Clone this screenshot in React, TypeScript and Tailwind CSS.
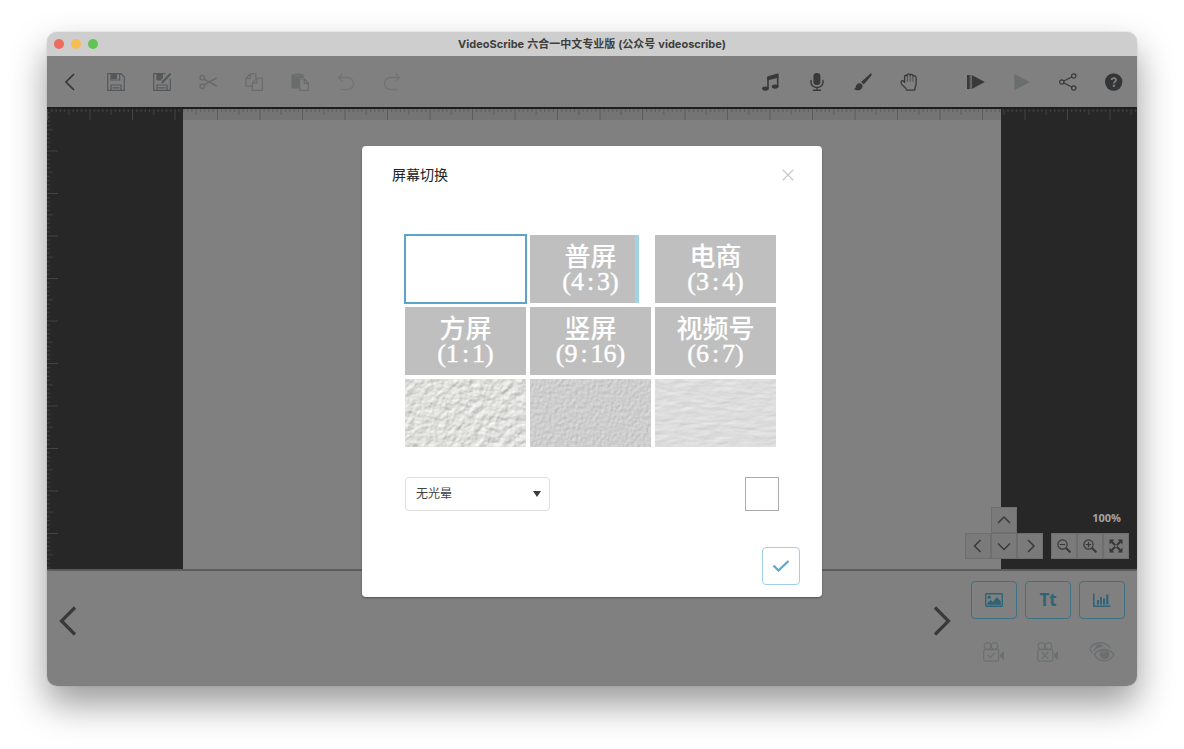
import React, { useState } from "react";

type IconProps = { children: React.ReactNode; className?: string; box?: string };

function Icon({ children, className = "size-[18px]", box = "0 0 18 18" }: IconProps) {
  return (
    <svg
      viewBox={box}
      className={className}
      fill="none"
      stroke="currentColor"
      strokeWidth="1.2"
      strokeLinejoin="round"
      strokeLinecap="round"
      aria-hidden="true"
    >
      {children}
    </svg>
  );
}

type Tool = { label: string; color: string; icon: React.ReactNode };

const disk = "M14 .7H.7v16.6h16.6V4z";

const leftTools: Tool[] = [
  {
    label: "返回",
    color: "text-[#333536]",
    icon: <path d="M13 1 5 9l8 8" strokeWidth="1.7" strokeLinecap="butt" strokeLinejoin="miter" />,
  },
  {
    label: "保存",
    color: "text-[#55585a]",
    icon: (
      <>
        <path d={disk} />
        <path d="M4 17v-5h10v5M6 14.8h6M12.7 1v6H4V1" />
        <path d="M4 1h6v5H4z" fill="currentColor" stroke="none" />
      </>
    ),
  },
  {
    label: "另存为",
    color: "text-[#55585a]",
    icon: (
      <>
        <path d="M12 .7H.7v16.6h16.6V6" />
        <path d="M4 17v-5h10v5M6 14.8h6M4 1v6h4" />
        <path d="M4 1h6v4L7.500 7H4z" fill="currentColor" stroke="none" />
        <path d="M17 1.200 9.400 9.300" strokeWidth="2.200" />
      </>
    ),
  },
  {
    label: "剪切",
    color: "text-[#696c6d]",
    icon: (
      <>
        <circle cx="3.300" cy="4.800" r="2.200" strokeWidth="1.500" />
        <circle cx="3.300" cy="13.200" r="2.200" strokeWidth="1.500" />
        <path d="M5.300 6.200 17 12.800M5.300 11.800 17 5.200" strokeWidth="1.800" />
      </>
    ),
  },
  {
    label: "复制",
    color: "text-[#696c6d]",
    icon: (
      <>
        <path d="M7 13.200H.8V5.500l4.400-4.700h5.600v4.400M5.300 1v4.600H1" />
        <path d="M11.800 5.200h5.500v12.100H7.400V9.800zM11.800 5.400v4.500H7.600" />
      </>
    ),
  },
  {
    label: "粘贴",
    color: "text-[#696c6d]",
    icon: (
      <>
        <path d="M.5 1.200h12.200V5H8v10.500H.5z" fill="currentColor" stroke="none" />
        <path d="M3.800.5h5.600v2H3.800z" fill="currentColor" stroke="none" />
        <path d="M4 2.800h5.200" stroke="#808080" strokeWidth="0.6" />
        <path d="M8.600 6h4.800l4 4.200v7.100H8.600zM13.200 6v4.400h4" />
      </>
    ),
  },
  {
    label: "撤销",
    color: "text-[#717475]",
    icon: <path d="M5 1 1.500 4.500 5 8M1.800 4.500h8.700a6 6 0 0 1 0 12H4" strokeWidth="1.400" />,
  },
  {
    label: "重做",
    color: "text-[#717475]",
    icon: <path d="M13 1l3.500 3.500L13 8M16.200 4.500H7.500a6 6 0 0 0 0 12H14" strokeWidth="1.400" />,
  },
];

const mediaTools: Tool[] = [
  {
    label: "音乐",
    color: "text-[#37393a]",
    icon: (
      <>
        <path d="M5.200 3.400 16.500.3v4.400L5.200 7.600z" fill="currentColor" stroke="none" />
        <path d="M6 5v10M15.700 3v10.500" strokeWidth="1.600" />
        <ellipse cx="3.400" cy="15.600" rx="3.400" ry="2.100" fill="currentColor" stroke="none" />
        <ellipse cx="13.100" cy="13.600" rx="3.400" ry="2.100" fill="currentColor" stroke="none" />
      </>
    ),
  },
  {
    label: "录音",
    color: "text-[#37393a]",
    icon: (
      <>
        <rect x="5.400" y="0" width="7" height="12" rx="3.300" fill="currentColor" stroke="none" />
        <path d="M3 7.500v2a6 5 0 0 0 12 0v-2M9 14.500v2.500M5.500 17.300h7" strokeWidth="1.400" />
      </>
    ),
  },
  {
    label: "画笔",
    color: "text-[#37393a]",
    icon: (
      <>
        <path d="M16.800.3c1 .4 1.300 1.300.6 2.200L9.800 11.500 7.100 9z" fill="currentColor" stroke="none" />
        <path
          d="M6 10.200c1.600.4 2.600 1.500 2.600 3.200-.7 4.300-6.300 5.100-8.700 2.300 2.200 0 1.600-2 2.500-3.700.8-1.400 2.100-2 3.600-1.800z"
          fill="currentColor"
          stroke="none"
        />
      </>
    ),
  },
  {
    label: "选择手势",
    color: "text-[#37393a]",
    icon: (
      <>
        <path
          d="M4.600 9.500V3.600c0-1.700 2.300-1.700 2.500-.6.100-2.800 2.900-2.900 3.100-.6.500-1.600 2.800-1.300 2.900.8.900-1 3 -.6 3 1.500v6.100c0 2.500-1.400 3.500-1.400 6.300H6.600c0-2.500-5.300-4.500-5.600-7.300C.8 7.200 3.200 7 4.600 9.500z"
          strokeWidth="1.300"
        />
        <path d="M7.400 3.500v4.800M10.200 2.500v5.800M12.900 3.500v4.800" strokeWidth="0.700" />
      </>
    ),
  },
];

const playTools: Tool[] = [
  {
    label: "从头播放",
    color: "text-[#37393a]",
    icon: <path d="M0 2h2.800v14H0zM4.800 2l13 7-13 7zM3.600 2h.5v14h-.5z" fill="currentColor" stroke="none" />,
  },
  {
    label: "播放",
    color: "text-[#6b6e6f]",
    icon: <path d="M1.300.8 17 9 1.300 17.200z" fill="currentColor" stroke="none" />,
  },
  {
    label: "分享",
    color: "text-[#37393a]",
    icon: (
      <>
        <circle cx="2.800" cy="9" r="2.200" />
        <circle cx="14.800" cy="3" r="2.200" />
        <circle cx="14.800" cy="15" r="2.200" />
        <path d="m4.900 8 7.800-4M4.900 10l7.800 4" />
      </>
    ),
  },
  {
    label: "帮助",
    color: "text-[#333536]",
    icon: (
      <>
        <circle cx="8.700" cy="9" r="8.700" fill="currentColor" stroke="none" />
        <path d="M6.600 7.100c0-2.700 4.500-2.700 4.500-.2 0 1.700-2.200 1.700-2.200 3.500" stroke="#808080" strokeWidth="1.700" strokeLinecap="butt" />
        <circle cx="8.900" cy="12.700" r="1.200" fill="#808080" stroke="none" />
      </>
    ),
  },
];

function ToolGroup({ tools }: { tools: Tool[] }) {
  return (
    <div className="flex">
      {tools.map((t) => (
        <button key={t.label} aria-label={t.label} className={`flex h-[51px] w-[46px] items-center justify-center ${t.color}`}>
          <Icon>{t.icon}</Icon>
        </button>
      ))}
    </div>
  );
}

const tickSteps = [1, 2, 3, 4, 5, 6, 7, 8, 9, 10];
const tickLength = (i: number) => (i === 10 ? 11 : i === 5 ? 6 : 3);

function Rulers() {
  return (
    <svg className="pointer-events-none absolute inset-0 size-full" aria-hidden="true">
      <defs>
        <pattern id="ruler-x" x="1" width="42.5" height="12" patternUnits="userSpaceOnUse">
          {tickSteps.map((i) => (
            <rect key={i} x={i * 4.25 - 1} y="0" width="1" height={tickLength(i)} fill="#505050" />
          ))}
        </pattern>
        <pattern id="ruler-y" width="12" height="42.5" patternUnits="userSpaceOnUse">
          {tickSteps.map((i) => (
            <rect key={i} x="0" y={i * 4.25 - 1} width={tickLength(i)} height="1" fill="#505050" />
          ))}
        </pattern>
      </defs>
      <rect width="100%" height="12" fill="url(#ruler-x)" opacity="0.7" />
      <rect width="12" height="100%" fill="url(#ruler-y)" opacity="0.7" />
    </svg>
  );
}

const padButton = "flex h-[26px] w-[26px] items-center justify-center border border-[#6e6e6e] bg-[#7a7a7a] text-[#37393a]";

function Chevron({ d }: { d: string }) {
  return (
    <Icon className="size-4 shrink-0" box="0 0 16 16">
      <path d={d} strokeWidth="1.500" strokeLinecap="butt" strokeLinejoin="miter" />
    </Icon>
  );
}

function CanvasControls() {
  return (
    <div className="absolute right-2 bottom-[10px] flex items-end gap-2">
      <div className="grid grid-cols-3">
        <button aria-label="上移" className={`${padButton} col-start-2`}>
          <Chevron d="m2 11 6-6 6 6" />
        </button>
        <button aria-label="左移" className={`${padButton} col-start-1`}>
          <Chevron d="m10.500 2-6 6 6 6" />
        </button>
        <button aria-label="下移" className={padButton}>
          <Chevron d="m2 5.500 6 6 6-6" />
        </button>
        <button aria-label="右移" className={padButton}>
          <Chevron d="m6 2 6 6-6 6" />
        </button>
      </div>
      <div className="flex flex-col items-end">
        <span className="px-2 pb-2 font-['Open_Sans',sans-serif] text-[11px] leading-[14px] font-bold text-[#a3a3a3]">100%</span>
        <div className="flex">
          <button aria-label="缩小" className={padButton}>
            <Icon className="size-[14px] shrink-0" box="0 0 14 14">
              <circle cx="5.500" cy="5.500" r="4.600" />
              <path d="M3.300 5.500h4.400" />
              <path d="m9.200 9.200 3.600 3.600" strokeWidth="2" />
            </Icon>
          </button>
          <button aria-label="放大" className={padButton}>
            <Icon className="size-[14px] shrink-0" box="0 0 14 14">
              <circle cx="5.500" cy="5.500" r="4.600" />
              <path d="M3.300 5.500h4.400M5.500 3.300v4.400" />
              <path d="m9.200 9.200 3.600 3.600" strokeWidth="2" />
            </Icon>
          </button>
          <button aria-label="适应屏幕" className={padButton}>
            <Icon className="size-[14px] shrink-0" box="0 0 14 14">
              <path d="M.5.500h5L.5 5.500zM13.500.500v5l-5-5zM.5 13.500v-5l5 5zM13.500 13.500h-5l5-5z" fill="currentColor" stroke="none" />
              <path d="m2 2 10 10M12 2 2 12" strokeWidth="2.200" strokeLinecap="butt" />
              <path d="m7 5.600 1.400 1.400L7 8.400 5.600 7z" fill="#7a7a7a" stroke="none" />
            </Icon>
          </button>
        </div>
      </div>
    </div>
  );
}

const addButton = "flex h-[38px] w-[46px] items-center justify-center rounded-[4px] border border-[#3f7185] text-[#2f6377]";
const actionButton = "flex h-[38px] w-[46px] items-center justify-center text-[#6c6f70]";

function Camera({ mark }: { mark: string }) {
  return (
    <Icon className="h-5 w-[22px]" box="0 0 22 20">
      <circle cx="4.500" cy="4" r="3.300" />
      <circle cx="11.500" cy="4" r="3.300" />
      <rect x=".7" y="7.600" width="15" height="11.500" rx="1.500" />
      <path d={mark} />
      <path d="M21 9v9l-4-3.300v-2.400z" fill="currentColor" stroke="none" />
    </Icon>
  );
}

function Timeline() {
  return (
    <footer className="flex items-center justify-between border-t-2 border-[#5c5c5c] pr-3 pb-[15px] pl-2">
      <button aria-label="上一帧" className="p-1 text-[#37393a]">
        <Icon className="h-[30px] w-[18px]" box="0 0 18 30">
          <path d="M16 1.500 2.500 15 16 28.500" strokeWidth="3.200" strokeLinecap="butt" strokeLinejoin="miter" />
        </Icon>
      </button>
      <div className="flex items-center gap-5">
        <button aria-label="下一帧" className="text-[#37393a]">
          <Icon className="h-[30px] w-[18px]" box="0 0 18 30">
            <path d="M2 1.500 15.500 15 2 28.500" strokeWidth="3.200" strokeLinecap="butt" strokeLinejoin="miter" />
          </Icon>
        </button>
        <div className="grid grid-cols-3 gap-x-2 gap-y-[14px] pt-[10px]">
          <button aria-label="添加图片" className={addButton}>
            <Icon className="h-[14px] w-[18px]" box="0 0 18 14">
              <rect x=".7" y=".7" width="16.600" height="12.600" rx=".6" strokeWidth="1.400" />
              <path d="M2.500 11.800V10l3-3 2.500 2 4-5 3.800 4.500v3.300z" fill="currentColor" stroke="none" />
              <circle cx="4.300" cy="4.200" r="1.600" fill="currentColor" stroke="none" />
            </Icon>
          </button>
          <button aria-label="添加文字" className={`${addButton} font-['Open_Sans',sans-serif] text-[17px] font-bold`}>
            Tt
          </button>
          <button aria-label="添加图表" className={addButton}>
            <Icon className="h-[14px] w-[18px]" box="0 0 18 14">
              <path d="M.8.500v12.700H17.500" strokeWidth="1.500" strokeLinecap="butt" />
              <path d="M4 7h2v4.500H4zM7 4h2v7.500H7zM10 5.500h2v6h-2zM13.200 1.500h2.200v10h-2.200z" fill="currentColor" stroke="none" />
            </Icon>
          </button>
          <button aria-label="设置镜头" className={actionButton}>
            <Camera mark="m4.800 13.300 2.400 2.300 4.200-4.400" />
          </button>
          <button aria-label="清除镜头" className={actionButton}>
            <Camera mark="m5 10.500 6 6m0-6-6 6" />
          </button>
          <button aria-label="预览" className={actionButton}>
            <Icon className="h-5 w-[26px]" box="0 0 26 20">
              <path d="M.8 7C5-.8 16-1.200 20.800 5.500M3 11 .8 7M5 8.500C6 6.500 7.500 5.300 9.500 4.500" strokeWidth="1.400" />
              <path d="M6.800 3.500c2-1.800 5.500-2 7.800.6L8.500 6.500c-1.200-1-2-1.500-1.700-3z" fill="currentColor" stroke="none" />
              <path d="M5.500 12.300C10 5.800 20 5.800 25 12.500 20 21 9.500 21 5.500 12.300z" fill="#808080" strokeWidth="1.400" />
              <circle cx="15.500" cy="12.500" r="4.900" fill="currentColor" stroke="none" />
              <path d="M13.300 10.800c.7-.9 1.800-1.200 2.700-.9" stroke="#808080" strokeWidth="1" />
            </Icon>
          </button>
        </div>
      </div>
    </footer>
  );
}

type TextureKind = "chips" | "leather" | "paper";
type Screen = { name: string; ratio?: [string, string]; texture?: TextureKind };

const screens: Screen[] = [
  { name: "空白" },
  { name: "普屏", ratio: ["4", "3"] },
  { name: "电商", ratio: ["3", "4"] },
  { name: "方屏", ratio: ["1", "1"] },
  { name: "竖屏", ratio: ["9", "16"] },
  { name: "视频号", ratio: ["6", "7"] },
  { name: "碎纸", texture: "chips" },
  { name: "皮革", texture: "leather" },
  { name: "纸纹", texture: "paper" },
];

const textures = {
  chips: { freq: "0.14 0.15", octaves: 4, seed: 7, scale: 0.9, light: "#e0e0dd" },
  leather: { freq: "0.34 0.28", octaves: 2, seed: 3, scale: 0.35, light: "#cfcfcf" },
  paper: { freq: "0.06 0.2", octaves: 3, seed: 12, scale: 0.3, light: "#dedede" },
};

function Texture({ kind }: { kind: TextureKind }) {
  const t = textures[kind];
  return (
    <svg className="size-full" aria-hidden="true">
      <filter id={`texture-${kind}`} x="0" y="0" width="100%" height="100%" colorInterpolationFilters="sRGB">
        <feTurbulence type="fractalNoise" baseFrequency={t.freq} numOctaves={t.octaves} seed={t.seed} />
        <feColorMatrix values="0 0 0 0 0  0 0 0 0 0  0 0 0 0 0  1 0 0 0 0" />
        <feDiffuseLighting surfaceScale={t.scale} diffuseConstant="1.15" lightingColor={t.light}>
          <feDistantLight azimuth="235" elevation="60" />
        </feDiffuseLighting>
      </filter>
      <rect width="100%" height="100%" filter={`url(#texture-${kind})`} />
    </svg>
  );
}

function ScreenTile({ screen, selected, onSelect }: { screen: Screen; selected: boolean; onSelect: () => void }) {
  const ring = selected ? "outline-2 -outline-offset-1 outline-[#5ba6c8]" : "";
  return (
    <button aria-label={screen.ratio ? undefined : screen.name} aria-pressed={selected} onClick={onSelect} className={`flex h-[68px] ${ring}`}>
      {screen.texture && <Texture kind={screen.texture} />}
      {screen.ratio && (
        <span
          className={`flex h-full flex-col items-center justify-center text-white ${
            screen.name === "普屏" ? "w-[109px] border-r-4 border-[#a0d3e8] bg-[#bfbfbf] pl-4" : "w-full bg-[#bfbfbf]"
          }`}
        >
          <span className="font-['Noto_Sans_CJK_SC',sans-serif] text-[26px] leading-[26px] font-medium">{screen.name}</span>
          <span className="font-['Liberation_Serif',serif] text-[26px] leading-7 [-webkit-text-stroke:0.4px_white]">
            ({screen.ratio[0]}
            <span className="px-[3px]">:</span>
            {screen.ratio[1]})
          </span>
        </span>
      )}
    </button>
  );
}

function ScreenDialog() {
  const [selected, setSelected] = useState("空白");
  return (
    <div role="dialog" aria-labelledby="dialog-title" className="w-[460px] rounded-[4px] bg-white pb-3 shadow-[0_1px_2px_rgba(0,0,0,0.35)]">
      <header className="flex items-center justify-between pt-[19px] pr-7 pl-[30px]">
        <h1 id="dialog-title" className="text-sm leading-5 text-[#222]">
          屏幕切换
        </h1>
        <button aria-label="关闭" className="text-[#c9c9c9]">
          <Icon className="size-3" box="0 0 12 12">
            <path d="m1 1 10 10M11 1 1 11" />
          </Icon>
        </button>
      </header>
      <div className="grid grid-cols-3 gap-1 pt-[50px] pr-[46px] pl-[43px]">
        {screens.map((s) => (
          <ScreenTile key={s.name} screen={s} selected={selected === s.name} onSelect={() => setSelected(s.name)} />
        ))}
      </div>
      <div className="flex items-center justify-between pt-[30px] pr-[43px] pl-[43px]">
        <div className="relative flex items-center">
          <select
            aria-label="光晕"
            className="h-[34px] w-[145px] appearance-none rounded-[4px] border border-[#dedede] bg-white px-[10px] text-xs text-[#444]"
          >
            <option>无光晕</option>
          </select>
          <svg viewBox="0 0 8 6" className="pointer-events-none absolute right-[9px] h-[6px] w-2 text-[#3c3c3c]" aria-hidden="true">
            <path d="M0 0h8L4 6z" fill="currentColor" />
          </svg>
        </div>
        <button aria-label="背景颜色" className="size-[34px] border border-[#ababab] bg-white" />
      </div>
      <div className="flex justify-end pt-9 pr-[22px]">
        <button aria-label="确定" className="flex h-[38px] w-[38px] items-center justify-center rounded-[4px] border border-[#9fd0e6] text-[#56a9cc]">
          <Icon className="h-3 w-[18px]" box="0 0 18 12">
            <path d="m1.500 5.500 5 5 10-9.500" strokeWidth="2.200" strokeLinecap="butt" strokeLinejoin="miter" />
          </Icon>
        </button>
      </div>
    </div>
  );
}

export default function App() {
  return (
    <div className="flex min-h-screen flex-col bg-white px-[47px] pt-8 pb-[63px] font-['Liberation_Sans','Noto_Sans_CJK_SC',sans-serif]">
      <div className="flex flex-1 flex-col overflow-hidden rounded-[10px] shadow-[0_0_1px_rgba(0,0,0,0.4),0_18px_36px_rgba(0,0,0,0.4)]">
        <div className="flex h-6 items-center bg-[#cecece] px-[7px]">
          <div className="flex flex-1 gap-[7px]">
            <button aria-label="关闭窗口" className="size-[10px] rounded-full bg-[#ed6b5f]" />
            <button aria-label="最小化" className="size-[10px] rounded-full bg-[#f5be4f]" />
            <button aria-label="全屏" className="size-[10px] rounded-full bg-[#61c554]" />
          </div>
          <div className="font-['Inter','Noto_Sans_CJK_SC',sans-serif] text-[11px] leading-4 font-bold text-[#3e3e3e]">
            VideoScribe<span className="px-[3px]">六合一中文专业版</span>(公众号<span className="pl-[3px]">videoscribe)</span>
          </div>
          <div className="flex-1" />
        </div>
        <main className="relative flex flex-1 flex-col bg-[#808080]">
          <nav className="flex justify-between border-b-2 border-[#1e1e1e]">
            <ToolGroup tools={leftTools} />
            <div className="flex gap-[21px]">
              <ToolGroup tools={mediaTools} />
              <ToolGroup tools={playTools} />
            </div>
          </nav>
          <section className="relative flex flex-1 justify-center bg-[#272727]">
            <div className="w-3/4 bg-[#808080]">
              <div className="h-[11px] bg-[#747474]" />
            </div>
            <Rulers />
            <CanvasControls />
          </section>
          <Timeline />
          <div className="absolute inset-0 flex items-center justify-center">
            <ScreenDialog />
          </div>
        </main>
      </div>
    </div>
  );
}
